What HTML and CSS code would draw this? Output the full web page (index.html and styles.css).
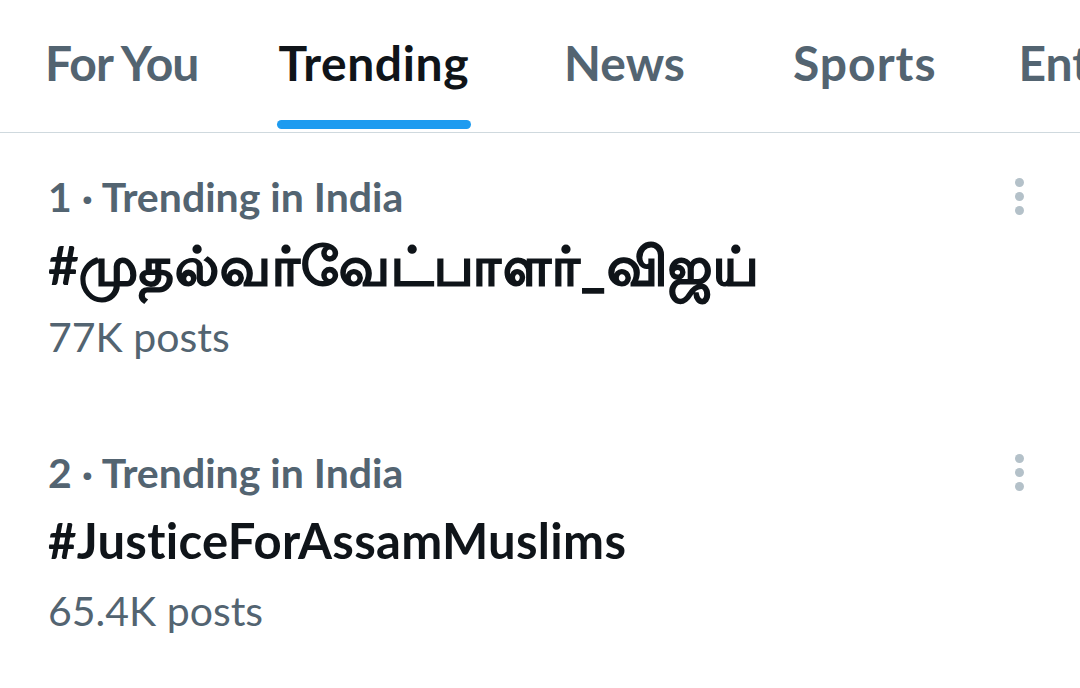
FILE: index.html
```html
<!DOCTYPE html>
<html>
<head>
<meta charset="utf-8">
<link rel="stylesheet" href="styles.css">
</head>
<body>
<div class="page">
  <nav class="tabs">
    <div class="tab t1"><span class="label">For You</span></div>
    <div class="tab t2 active"><span class="label">Trending</span><span class="bar"></span></div>
    <div class="tab t3"><span class="label">News</span></div>
    <div class="tab t4"><span class="label">Sports</span></div>
    <div class="tab t5"><span class="label">Entertainment</span></div>
  </nav>
  <section class="list">
    <article class="trend">
      <div class="text">
        <div class="meta">1 · Trending in India</div>
        <div class="tag tamil">#<span class="ta">முதல்வர்வேட்பாளர்_விஜய்</span></div>
        <div class="count">77K posts</div>
      </div>
      <div class="more"><span></span><span></span><span></span></div>
    </article>
    <article class="trend second">
      <div class="text">
        <div class="meta">2 · Trending in India</div>
        <div class="tag latin">#JusticeForAssamMuslims</div>
        <div class="count">65.4K posts</div>
      </div>
      <div class="more"><span></span><span></span><span></span></div>
    </article>
  </section>
</div>
</body>
</html>
```
FILE: styles.css
```css
* { box-sizing: border-box; }
html, body { margin: 0; padding: 0; background: #fff; }
body { width: 1080px; height: 688px; overflow: hidden; font-family: Lato, "Noto Sans", sans-serif; }
.page { width: 1080px; }
.tabs {
  display: flex;
  height: 133px;
  border-bottom: 1px solid #cfd9de;
  padding-left: 45px;
  white-space: nowrap;
  overflow: hidden;
}
.tab {
  position: relative;
  flex: none;
  display: flex;
  align-items: flex-start;
  padding-top: 34px;
  font-size: 48px;
  font-weight: 700;
  color: #536471;
  line-height: 58px;
}
.t1 { margin-right: 80px; }
.t2 { margin-right: 95px; }
.t3 { margin-right: 108px; }
.t4 { margin-right: 82px; }
.t1 .label { letter-spacing: -0.85px; }
.t2 .label { letter-spacing: 0.6px; }
.t4 .label { letter-spacing: 1px; }
.active { color: #0f1419; }
.bar {
  position: absolute;
  left: -2px; right: -2px;
  top: 120px;
  height: 9px;
  border-radius: 5px;
  background: #1d9bf0;
}
.list { display: flex; flex-direction: column; }
.trend {
  display: flex;
  justify-content: space-between;
  padding: 37px 0 0 48px;
}
.trend.second { padding-top: 78px; }
.text { display: flex; flex-direction: column; }
.meta { font-size: 41px; font-weight: 700; color: #536471; line-height: 54px; }
.tag { font-weight: 700; color: #0f1419; }
.tamil { font-size: 53px; line-height: 82px; }
.ta { -webkit-text-stroke: 1.3px #0f1419; letter-spacing: 1.1px; }
.latin { font-size: 49px; line-height: 80px; letter-spacing: 0.3px; }
.count { font-size: 41px; color: #536471; line-height: 62px; font-weight: 400; }
.more {
  display: flex; flex-direction: column; gap: 5px;
  padding: 8px 56px 0 0;
}
.more span { width: 9px; height: 9px; border-radius: 50%; background: #b4c1c9; }
```
